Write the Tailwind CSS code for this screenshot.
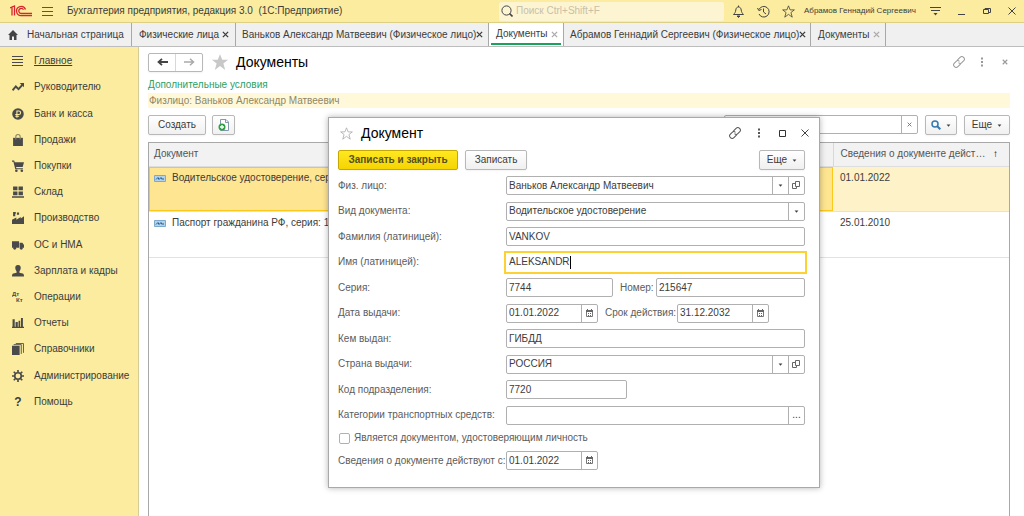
<!DOCTYPE html>
<html lang="ru">
<head>
  <meta charset="UTF-8">
  <meta name="viewport" content="width=device-width, initial-scale=1.0">
  <title>Бухгалтерия предприятия, редакция 3.0</title>
  <script src="https://cdn.jsdelivr.net/npm/@tailwindcss/browser@4"></script>
</head>
<body class="h-screen flex flex-col overflow-hidden bg-white font-['Liberation_Sans',Arial,sans-serif] text-[10px] leading-4 text-[#3c3c3c]">

  <!-- общие иконки -->
  <svg class="hidden">
    <symbol id="i-down" viewBox="0 0 6 4"><path d="M0.5 0.5h5L3 3.5z" fill="currentColor"/></symbol>
    <symbol id="i-x" viewBox="0 0 8 8"><path d="M1 1l6 6M7 1L1 7" stroke="currentColor" stroke-width="1.5" fill="none"/></symbol>
    <symbol id="i-open" viewBox="0 0 9 9"><path d="M3.500 .5h4v5h-4zM3 2.500H.5v5h4V6" stroke="#666" fill="none"/></symbol>
    <symbol id="i-cal" viewBox="0 0 9 9"><path d="M1.500 2.500h6v5h-6z" stroke="#777" fill="none"/><path d="M1 1h7v2H1zM2 0h1v2H2zM6 0h1v2H6zM3 4h1v1H3zM5 4h1v1H5zM3 6h1v1H3zM5 6h1v1H5z" fill="#666"/></symbol>
    <symbol id="i-link" viewBox="0 0 14 14"><g transform="rotate(-45 7 7)" stroke="currentColor" fill="none" stroke-linecap="round"><path d="M6.500 9.500H3a2.500 2.500 0 0 1 0-5H5.500a2.300 2.300 0 0 1 2.300 2"/><path d="M7.500 4.500H11a2.500 2.500 0 0 1 0 5H8.500a2.300 2.300 0 0 1-2.300-2"/></g></symbol>
    <symbol id="i-dots" viewBox="0 0 4 10"><path d="M1 0.500h2v2H1zM1 4h2v2H1zM1 7.500h2v2H1z" fill="currentColor"/></symbol>
    <symbol id="i-star" viewBox="0 0 16 16"><path d="M8 1l2 5h5.200l-4.200 3.300L12.600 15 8 11.500 3.400 15 5 9.300.8 6H6z"/></symbol>
    <symbol id="i-doc" viewBox="0 0 12 7"><path d="M.5.5h11v6H.5z" fill="#b4d3ea" stroke="#7fa9cc"/><path d="M2 4.500l2-2 1 2 2-2 .500 1.500H10" stroke="#1f5b96" fill="none"/></symbol>
  </svg>

  <!-- заголовок программы -->
  <header class="h-[23px] shrink-0 flex items-center bg-[#fbec9f] border-b border-[#dccf86]">
    <svg class="ml-[10px] w-[22px] h-3 shrink-0" viewBox="0 0 22 12" fill="none" stroke="#d8262c" stroke-width="1.300">
      <path d="M0 3L2 2v8.500M4.500 10.500V1L2 2"/>
      <path d="M15.500 4.500A4.600 4.600 0 1 0 11.500 10.600H22"/>
      <path d="M13.500 4.800A2.500 2.500 0 1 0 11.500 8.500H22"/>
    </svg>
    <button aria-label="Меню" class="ml-[10px]">
      <svg class="w-[11px] h-[10px]" viewBox="0 0 11 10" stroke="#555"><path d="M0 1.500h11M0 5.500h11M0 9.500h11"/></svg>
    </button>
    <h1 class="ml-[14px] whitespace-pre">Бухгалтерия предприятия, редакция 3.0  (1С:Предприятие)</h1>
    <label class="ml-auto w-[225px] h-[19px] flex items-center gap-[3px] pl-[2px] rounded-xs bg-[#fdf5d2]">
      <svg class="w-3 h-3 shrink-0" viewBox="0 0 12 12" fill="none" stroke="#444"><circle cx="5.500" cy="5.500" r="4.600"/><path d="M8.500 8.500l3 3" stroke-width="1.600"/></svg>
      <input type="search" aria-label="Поиск" placeholder="Поиск Ctrl+Shift+F" class="w-full outline-none placeholder:text-[#c8c0a8]">
    </label>
    <button aria-label="Уведомления" class="ml-[8px]">
      <svg class="w-[13px] h-[13px]" viewBox="0 0 13 13" fill="none" stroke="#444"><path d="M1.500 9.500h10c-1.500-1.500-2-2.500-2.300-4.500C9 3 8 2 6.500 2S4 3 3.800 5c-.3 2-.8 3-2.300 4.500zM6.500.5V2"/><path d="M5 11h3l-1.500 1.500z" fill="#444"/></svg>
    </button>
    <button aria-label="История" class="ml-[12px]">
      <svg class="w-[13px] h-[13px]" viewBox="0 0 13 13" fill="none" stroke="#444"><path d="M2 4.500A5.300 5.300 0 1 1 2 9M6.500 3.500v3.500l2.500 2"/><path d="M.5 3l1.300 2.500L4.500 4.500"/></svg>
    </button>
    <button aria-label="Избранное" class="ml-[12px]">
      <svg class="w-[13px] h-[13px]" viewBox="0 0 16 16" fill="none" stroke="#444"><use href="#i-star"/></svg>
    </button>
    <span class="ml-[9px] text-[8px] w-[116px] whitespace-nowrap">Абрамов Геннадий Сергеевич</span>
    <button aria-label="Сервис" class="ml-[10px]">
      <svg class="w-[11px] h-[10px]" viewBox="0 0 11 10" stroke="#444"><path d="M0 1.500h11M1 4.500h9"/><path d="M3.500 7h4L5.500 9.500z" fill="#444" stroke="none"/></svg>
    </button>
    <button aria-label="Свернуть" class="ml-[17px]"><svg class="w-[7px] h-[9px]" stroke="#444"><path d="M0 7.500h7"/></svg></button>
    <button aria-label="Восстановить" class="ml-[18px]"><svg class="w-[8px] h-[8px]" viewBox="0 0 8 8" fill="none" stroke="#444"><path d="M.5 2.500h5v4h-5zM2 2.500v-1h5.500v4H6"/></svg></button>
    <button aria-label="Закрыть" class="ml-[17px] mr-[8px]"><svg class="w-[8px] h-[8px]" viewBox="0 0 8 8" stroke="#444"><path d="M.5.5l7 7M7.500.5l-7 7"/></svg></button>
  </header>

  <!-- вкладки -->
  <nav class="h-[24px] shrink-0 flex bg-[#f0f0f0] border-b border-[#bdbdbd] whitespace-nowrap *:border-r *:border-[#a8a8a8] [&_svg]:shrink-0">
    <a href="#" class="w-[132px] flex items-center gap-[9px] pl-2">
      <svg class="w-[10px] h-[10px]" viewBox="0 0 10 10" fill="#444"><path d="M5 0l5 5H8.500v5H6V6.500H4V10H1.500V5H0z"/></svg>
      Начальная страница
    </a>
    <div class="w-[104px] flex items-center justify-between pl-[7px] pr-[6px]">
      <a href="#">Физические лица</a>
      <button aria-label="Закрыть вкладку"><svg class="w-[7px] h-[7px]"><use href="#i-x"/></svg></button>
    </div>
    <div class="w-[253px] flex items-center justify-between pl-[6px] pr-[5px]">
      <a href="#">Ваньков Александр Матвеевич (Физическое лицо)</a>
      <button aria-label="Закрыть вкладку"><svg class="w-[7px] h-[7px]"><use href="#i-x"/></svg></button>
    </div>
    <div class="w-[75px] px-[2px] bg-white">
      <div class="h-[22px] flex items-center justify-between pt-[2px] pl-[5px] pr-[3px] border-b-2 border-[#1aa35c]">
        <a href="#">Документы</a>
        <button aria-label="Закрыть вкладку" class="text-[#aaa]"><svg class="w-[7px] h-[7px]"><use href="#i-x"/></svg></button>
      </div>
    </div>
    <div class="w-[247px] flex items-center justify-between pl-[6px] pr-[4px]">
      <a href="#">Абрамов Геннадий Сергеевич (Физическое лицо)</a>
      <button aria-label="Закрыть вкладку"><svg class="w-[7px] h-[7px]"><use href="#i-x"/></svg></button>
    </div>
    <div class="w-[75px] flex items-center justify-between pl-[7px] pr-[5px]">
      <a href="#">Документы</a>
      <button aria-label="Закрыть вкладку" class="text-[#aaa]"><svg class="w-[7px] h-[7px]"><use href="#i-x"/></svg></button>
    </div>
  </nav>

  <div class="flex-1 min-h-0 flex">
    <!-- разделы -->
    <aside class="w-[139px] shrink-0 bg-[#fbec9f] border-r border-[#d5cc9a]">
      <ul class="h-[367px] mt-px grid *:flex *:items-center *:gap-[10px] *:pl-[12px] [&_svg]:w-[12px] [&_svg]:h-[12px] [&_svg]:shrink-0 [&_svg]:text-[#4a4a4a]">
        <li><svg viewBox="0 0 12 12" stroke="currentColor"><path d="M0 1.500h11M0 4.500h11M0 7.500h11M0 10.500h11"/></svg><a href="#" class="underline">Главное</a></li>
        <li><svg viewBox="0 0 11 11" stroke="currentColor" fill="none"><path d="M.5 8.500L3.500 5l2.500 2.500L9.500 3.500" stroke-width="1.800"/><path d="M7 1.800h4v4z" fill="currentColor" stroke="none"/></svg><a href="#">Руководителю</a></li>
        <li><svg viewBox="0 0 11 11"><circle cx="5.500" cy="5.500" r="5.300" fill="currentColor"/><path d="M4.500 9V2.800h1.800a1.600 1.600 0 0 1 0 3.200H3M3 7.500h3.500" stroke="#fbec9f" fill="none"/></svg><a href="#">Банк и касса</a></li>
        <li><svg viewBox="0 0 11 11"><path d="M1 3.500h9V11H1z" fill="currentColor"/><path d="M3.500 5V2.500a2 2 0 0 1 4 0V5" stroke="#8b8560" fill="none"/></svg><a href="#">Продажи</a></li>
        <li><svg viewBox="0 0 11 11" fill="currentColor"><path d="M0 .5h2L2.500 2H11L9.800 6.500H3.700L4 7.500h6v1H3L1.300 1.500H0z"/><circle cx="4" cy="9.800" r="1.200"/><circle cx="9" cy="9.800" r="1.200"/></svg><a href="#">Покупки</a></li>
        <li><svg viewBox="0 0 11 11" fill="currentColor"><path d="M1 .5h4v3.500H1zM6 .5h4v3.500H6zM1 5h4v3.500H1zM6 5h4v3.500H6zM0 9.300h11v1.500H0z"/></svg><a href="#">Склад</a></li>
        <li><svg viewBox="0 0 11 11" fill="currentColor"><path d="M0 11V7l4-2v2l4-2.500V6l3-2v7zM1 0h2.500v1.500H3V4H1zM4.500.5h2v2h-2z"/></svg><a href="#">Производство</a></li>
        <li><svg viewBox="0 0 11 11" fill="currentColor"><path d="M0 2h6.500v6H0zM7 3.500h2.500L11 5.500V8H7z"/><circle cx="2.500" cy="8.500" r="1.300"/><circle cx="8.500" cy="8.500" r="1.300"/></svg><a href="#">ОС и НМА</a></li>
        <li><svg viewBox="0 0 11 11" fill="currentColor"><path d="M5.500 0C7.500 0 8.200 1.500 8 3S7 5.500 6.800 6v1l3 .8c.9.300 1.200 1 1.200 2.700H0c0-1.700.3-2.400 1.200-2.700l3-.8V6C4 5.500 3.200 4.500 3 3S3.500 0 5.500 0z"/></svg><a href="#">Зарплата и кадры</a></li>
        <li><svg viewBox="0 0 12 12" fill="currentColor" font-size="6" font-weight="bold"><text x="0" y="5">Дт</text><text x="4" y="11">Кт</text></svg><a href="#">Операции</a></li>
        <li><svg viewBox="0 0 11 11" fill="currentColor"><path d="M.5 2h2v7h-2zM3.300 4.500h2V9h-2zM6 3.500h1.500V9H6zM8.200 1h1.800v8H8.200zM0 9h11v1H0z"/></svg><a href="#">Отчеты</a></li>
        <li><svg viewBox="0 0 11 11"><path d="M0 2.500h7V11H0z" fill="currentColor"/><path d="M1.500 1.500H8.500V10M3.500.5h7V9" stroke="currentColor" fill="none" stroke-width=".8"/></svg><a href="#">Справочники</a></li>
        <li><svg viewBox="0 0 11 11" stroke="currentColor" fill="none"><circle cx="5.500" cy="5.500" r="3" stroke-width="1.500"/><path d="M5.500 0v2M5.500 9v2M0 5.500h2M9 5.500h2M1.600 1.600L3 3M8 8l1.400 1.400M9.400 1.600L8 3M3 8L1.600 9.400" stroke-width="1.500"/></svg><a href="#">Администрирование</a></li>
        <li><span class="w-[12px] text-center text-[12px] font-bold">?</span><a href="#">Помощь</a></li>
      </ul>
    </aside>

    <main class="relative flex-1 min-w-0 flex flex-col pl-[9px] pr-[14px]">
      <div class="h-[30px] shrink-0 flex items-center">
        <div class="flex h-[19px] w-[55px] rounded-xs border border-[#b8b8b8] shadow-xs">
          <button aria-label="Назад" class="flex-1 flex items-center justify-center border-r border-[#d8d8d8]"><svg class="w-[11px] h-2" viewBox="0 0 11 8" fill="none" stroke="#444" stroke-width="1.800"><path d="M11 4H2M5 .8L1.500 4 5 7.200"/></svg></button>
          <button aria-label="Вперед" class="flex-1 flex items-center justify-center"><svg class="w-[11px] h-2" viewBox="0 0 11 8" fill="none" stroke="#aaa" stroke-width="1.500"><path d="M0 4h9M6 .8L9.500 4 6 7.200"/></svg></button>
        </div>
        <button aria-label="В избранное" class="ml-2"><svg class="w-[18px] h-[18px]" fill="#c8c8c8"><use href="#i-star"/></svg></button>
        <h2 class="ml-[7px] text-[14px] text-black">Документы</h2>
        <div class="ml-auto flex items-center text-[#999] mr-[2px]">
          <button aria-label="Ссылка"><svg class="w-[14px] h-[14px]"><use href="#i-link"/></svg></button>
          <button aria-label="Еще действия" class="ml-[14px]"><svg class="w-1 h-[10px]"><use href="#i-dots"/></svg></button>
          <button aria-label="Закрыть" class="ml-[18px]"><svg class="w-[6px] h-[6px]"><use href="#i-x"/></svg></button>
        </div>
      </div>
      <a href="#" class="text-[#2ba065]">Дополнительные условия</a>
      <p class="h-[15px] leading-[15px] bg-[#fff9da] text-[#8f8766] pl-px">Физлицо: Ваньков Александр Матвеевич</p>

      <div class="mt-[7px] h-[20px] shrink-0 flex">
        <button class="w-[58px] rounded-xs border border-[#b8b8b8] bg-linear-to-b from-white to-[#f0f0f0] shadow-xs">Создать</button>
        <button aria-label="Создать копированием" class="ml-[6px] w-[23px] flex items-center justify-center rounded-xs border border-[#b8b8b8] bg-linear-to-b from-white to-[#f0f0f0] shadow-xs">
          <svg class="w-[11px] h-3" viewBox="0 0 11 12"><path d="M2.500.5H8l2.500 2.500v8.500h-8z" fill="#fff" stroke="#8298ad"/><path d="M7.500.5V3.500h3" fill="none" stroke="#8298ad"/><circle cx="4" cy="8" r="3.500" fill="#2ea043"/><path d="M4 6v4M2 8h4" stroke="#fff" stroke-width="1.300"/></svg>
        </button>
        <div class="ml-auto w-[194px] h-[19px] flex rounded-xs border border-[#b0b0b0]">
          <input type="text" aria-label="Поиск в списке" class="flex-1 min-w-0 outline-none">
          <button aria-label="Очистить" class="w-[16px] flex items-center justify-center border-l border-[#b0b0b0] text-[#777]"><svg class="w-[5px] h-[5px]"><use href="#i-x"/></svg></button>
        </div>
        <button aria-label="Найти" class="ml-[7px] w-[32px] flex items-center justify-center gap-[5px] rounded-xs border border-[#b8b8b8] bg-linear-to-b from-white to-[#f0f0f0] shadow-xs">
          <svg class="w-[10px] h-[10px]" viewBox="0 0 10 10" fill="none" stroke="#3579b0"><circle cx="4" cy="4" r="3" stroke-width="1.500"/><path d="M6.300 6.300L9.300 9.300" stroke-width="2"/></svg>
          <svg class="w-[5px] h-[3px]"><use href="#i-down"/></svg>
        </button>
        <button class="ml-[7px] w-[46px] flex items-center justify-center gap-[5px] rounded-xs border border-[#b8b8b8] bg-linear-to-b from-white to-[#f0f0f0] shadow-xs">Еще <svg class="w-[5px] h-[3px]"><use href="#i-down"/></svg></button>
      </div>

      <div class="mt-[7px] flex-1 border border-b-0 border-[#a8a8a8]">
        <table class="w-full table-fixed text-left">
          <thead class="bg-[#f2f2f2]">
            <tr class="h-[23px] border-b border-[#ddd]">
              <th class="pl-[5px] font-normal text-[#555]">Документ</th>
              <th class="w-[176px] pl-[7px] pr-[11px] font-normal text-[#555] border-l border-[#d8d8d8]"><div class="flex justify-between whitespace-nowrap"><span>Сведения о документе дейст…</span><span class="text-black">↑</span></div></th>
            </tr>
          </thead>
          <tbody class="align-top">
            <tr class="h-[45px] border-b border-[#e2e2e2]">
              <td class="p-0"><div class="h-[44px] flex gap-[6px] border border-[#fbc81b] bg-[#fee591] pt-[2px] pl-[4px] whitespace-nowrap"><svg class="w-3 h-[7px] mt-[5px] shrink-0"><use href="#i-doc"/></svg>Водительское удостоверение, сер</div></td>
              <td class="bg-[#fef2c8] pt-[3px] pl-[7px]">01.01.2022</td>
            </tr>
            <tr class="h-[46px] border-b border-[#e2e2e2]">
              <td class="p-0"><div class="flex gap-[6px] pt-[3px] pl-[5px] whitespace-nowrap"><svg class="w-3 h-[7px] mt-[5px] shrink-0"><use href="#i-doc"/></svg>Паспорт гражданина РФ, серия: 12</div></td>
              <td class="pt-[3px] pl-[7px]">25.01.2010</td>
            </tr>
          </tbody>
        </table>
      </div>

      <!-- окно документа -->
      <form role="dialog" aria-label="Документ" class="absolute left-[189px] top-[70px] w-[492px] bg-white border border-[#a9a9a9] shadow-[0_0_6px_rgba(0,0,0,0.3)] pl-[9px] pr-[14px] pb-[17px]">
        <div class="h-[30px] flex items-center">
          <button type="button" aria-label="В избранное" class="ml-[2px]"><svg class="w-[13px] h-[13px]" viewBox="0 0 16 16" fill="none" stroke="#aaa"><use href="#i-star"/></svg></button>
          <h2 class="ml-[8px] text-[14px] text-black">Документ</h2>
          <div class="ml-auto -mr-[4px] flex items-center text-[#555]">
            <button type="button" aria-label="Ссылка"><svg class="w-[14px] h-[14px]"><use href="#i-link"/></svg></button>
            <button type="button" aria-label="Еще действия" class="ml-[15px]"><svg class="w-1 h-[10px]"><use href="#i-dots"/></svg></button>
            <button type="button" aria-label="Развернуть" class="ml-[18px]"><svg class="w-[7px] h-[7px]" fill="none" stroke="#333"><path d="M.5.5h6v6h-6z"/></svg></button>
            <button type="button" aria-label="Закрыть" class="ml-[15px]"><svg class="w-[8px] h-[8px]" viewBox="0 0 8 8" stroke="#444"><path d="M.5.5l7 7M7.500.5l-7 7"/></svg></button>
          </div>
        </div>
        <div class="mt-[2px] h-[20px] flex">
          <button type="submit" class="w-[120px] rounded-xs border border-[#c5a900] bg-linear-to-b from-[#ffe81f] to-[#f5d400] shadow-xs font-bold text-[#55501e]">Записать и закрыть</button>
          <button type="button" class="ml-[7px] w-[62px] rounded-xs border border-[#b8b8b8] bg-linear-to-b from-white to-[#f0f0f0] shadow-xs">Записать</button>
          <button type="button" class="ml-auto w-[46px] flex items-center justify-center gap-[5px] rounded-xs border border-[#b8b8b8] bg-linear-to-b from-white to-[#f0f0f0] shadow-xs">Еще <svg class="w-[5px] h-[3px]"><use href="#i-down"/></svg></button>
        </div>

        <div class="mt-[3px] h-[255px] grid grid-cols-[168px_1fr] grid-rows-10 items-center whitespace-nowrap [&_label]:text-[#5c5c5c]">
          <label for="person">Физ. лицо:</label>
          <div class="h-[19px] flex rounded-xs border border-[#b0b0b0]">
            <input id="person" type="text" value="Ваньков Александр Матвеевич" class="flex-1 min-w-0 pl-[2px] outline-none">
            <button type="button" aria-label="Выбрать" class="w-[16px] flex items-center justify-center border-l border-[#b0b0b0]"><svg class="w-[5px] h-[3px]"><use href="#i-down"/></svg></button>
            <button type="button" aria-label="Открыть" class="w-[16px] flex items-center justify-center border-l border-[#b0b0b0]"><svg class="w-[9px] h-[9px] shrink-0"><use href="#i-open"/></svg></button>
          </div>

          <label for="kind">Вид документа:</label>
          <div class="relative h-[19px] flex rounded-xs border border-[#b0b0b0]">
            <select id="kind" class="flex-1 appearance-none pl-[2px] outline-none">
              <option>Водительское удостоверение</option>
              <option>Паспорт гражданина РФ</option>
            </select>
            <span class="absolute inset-y-0 right-0 w-[16px] flex items-center justify-center border-l border-[#b0b0b0] pointer-events-none"><svg class="w-[5px] h-[3px]"><use href="#i-down"/></svg></span>
          </div>

          <label for="surname">Фамилия (латиницей):</label>
          <input id="surname" type="text" value="VANKOV" class="h-[19px] min-w-0 rounded-xs border border-[#b0b0b0] pl-[2px] outline-none">

          <label for="name">Имя (латиницей):</label>
          <div class="relative h-[23px] -mx-[2px] flex border-2 border-[#fbd134]">
            <input id="name" type="text" value="ALEKSANDR" class="flex-1 min-w-0 pl-[3px] outline-none caret-transparent">
            <span class="absolute left-[64px] top-[3px] w-px h-[13px] bg-black"></span>
          </div>

          <label for="series">Серия:</label>
          <div class="flex items-center">
            <input id="series" type="text" value="7744" class="w-[107px] h-[19px] rounded-xs border border-[#b0b0b0] pl-[2px] outline-none">
            <label for="number" class="w-[43px] pl-[7px]">Номер:</label>
            <input id="number" type="text" value="215647" class="flex-1 min-w-0 h-[19px] rounded-xs border border-[#b0b0b0] pl-[2px] outline-none">
          </div>

          <label for="issued">Дата выдачи:</label>
          <div class="flex items-center">
            <div class="w-[92px] h-[19px] flex rounded-xs border border-[#b0b0b0]">
              <input id="issued" type="text" value="01.01.2022" class="flex-1 min-w-0 pl-[2px] outline-none">
              <button type="button" aria-label="Календарь" class="w-[16px] flex items-center justify-center border-l border-[#b0b0b0]"><svg class="w-[9px] h-[9px] shrink-0"><use href="#i-cal"/></svg></button>
            </div>
            <label for="expires" class="w-[79px] pl-[7px]">Срок действия:</label>
            <div class="w-[92px] h-[19px] flex rounded-xs border border-[#b0b0b0]">
              <input id="expires" type="text" value="31.12.2032" class="flex-1 min-w-0 pl-[2px] outline-none">
              <button type="button" aria-label="Календарь" class="w-[16px] flex items-center justify-center border-l border-[#b0b0b0]"><svg class="w-[9px] h-[9px] shrink-0"><use href="#i-cal"/></svg></button>
            </div>
          </div>

          <label for="issuer">Кем выдан:</label>
          <input id="issuer" type="text" value="ГИБДД" class="h-[19px] min-w-0 rounded-xs border border-[#b0b0b0] pl-[2px] outline-none">

          <label for="country">Страна выдачи:</label>
          <div class="h-[19px] flex rounded-xs border border-[#b0b0b0]">
            <input id="country" type="text" value="РОССИЯ" class="flex-1 min-w-0 pl-[2px] outline-none">
            <button type="button" aria-label="Выбрать" class="w-[16px] flex items-center justify-center border-l border-[#b0b0b0]"><svg class="w-[5px] h-[3px]"><use href="#i-down"/></svg></button>
            <button type="button" aria-label="Открыть" class="w-[16px] flex items-center justify-center border-l border-[#b0b0b0]"><svg class="w-[9px] h-[9px] shrink-0"><use href="#i-open"/></svg></button>
          </div>

          <label for="code">Код подразделения:</label>
          <input id="code" type="text" value="7720" class="w-[121px] h-[19px] rounded-xs border border-[#b0b0b0] pl-[2px] outline-none">

          <label for="categories">Категории транспортных средств:</label>
          <div class="h-[19px] flex rounded-xs border border-[#b0b0b0]">
            <input id="categories" type="text" class="flex-1 min-w-0 pl-[2px] outline-none">
            <button type="button" aria-label="Подобрать" class="w-[16px] border-l border-[#b0b0b0]">...</button>
          </div>
        </div>

        <label class="h-[20px] flex items-center gap-[4px] pl-px text-[#5c5c5c]">
          <input type="checkbox" class="w-[11px] h-[11px] appearance-none rounded-xs border border-[#b0b0b0] checked:bg-[#fbd134]">
          Является документом, удостоверяющим личность
        </label>
        <div class="mt-[3px] flex items-center">
          <label for="valid" class="w-[168px] text-[#5c5c5c] whitespace-nowrap">Сведения о документе действуют с:</label>
          <div class="w-[92px] h-[19px] flex rounded-xs border border-[#b0b0b0]">
            <input id="valid" type="text" value="01.01.2022" class="flex-1 min-w-0 pl-[2px] outline-none">
            <button type="button" aria-label="Календарь" class="w-[16px] flex items-center justify-center border-l border-[#b0b0b0]"><svg class="w-[9px] h-[9px] shrink-0"><use href="#i-cal"/></svg></button>
          </div>
        </div>
      </form>
    </main>
  </div>
</body>
</html>
